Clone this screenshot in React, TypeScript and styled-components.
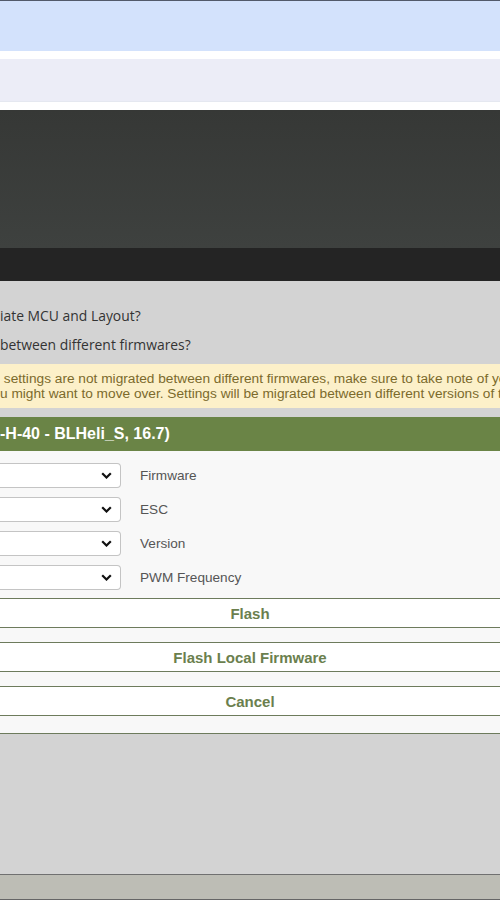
import React from 'react'
import styled, {createGlobalStyle} from 'styled-components'

const GlobalStyle = createGlobalStyle`
  html, body {
    margin: 0;
    padding: 0;
    overflow: hidden;
    font-family: 'Liberation Sans', Arial, sans-serif;
  }
`

const Page = styled.div`
  display: flex;
  flex-direction: column;
  width: 500px;
  height: 900px;
  background: #d3d3d3;
  overflow: hidden;
`

const Band = styled.div<{h: number; bg: string; line?: string}>`
  flex: none;
  height: ${(p) => p.h}px;
  background: ${(p) => p.bg};
  ${(p) => (p.line ? `border-top: 1px solid ${p.line};` : '')}
`

const Gap = styled.div<{h: number}>`
  flex: none;
  height: ${(p) => p.h}px;
  background: #fff;
`

const SubBand = styled.div`
  flex: none;
  height: 42px;
  background: #ecedf7;
  border-bottom: 1px solid #e5e8f0;
`

const Header = styled.div`
  flex: none;
  height: 138px;
  background: linear-gradient(to bottom, #363836, #3e413f);
`

const Toolbar = styled.div`
  flex: none;
  height: 33px;
  background: #242424;
`

const Content = styled.div`
  flex: none;
  padding-top: 25px;
  display: flex;
  flex-direction: column;
`

const Question = styled.p`
  margin: 0 0 9px;
  font-family: 'Open Sans', 'Noto Sans', sans-serif;
  font-size: 13.9px;
  line-height: 20px;
  color: #333;
  white-space: nowrap;
`

const Notice = styled.div`
  background: #fcf0c9;
  color: #7b6a2c;
  font-size: 13.7px;
  line-height: 15px;
  padding: 7px 0;
  white-space: nowrap;
  overflow: hidden;
`

const Panel = styled.div`
  margin-top: 9px;
  background: #f8f8f8;
  border-bottom: 1px solid #6d7b5c;
`

const PanelTitle = styled.div`
  height: 34px;
  display: flex;
  align-items: center;
  background: #6a8446;
  color: #fff;
  font-weight: bold;
  font-size: 16px;
  white-space: nowrap;
`

const PanelBody = styled.div`
  padding: 12px 0 17px;
  display: flex;
  flex-direction: column;
`

const Row = styled.div`
  display: flex;
  align-items: center;
  height: 25px;
  margin-bottom: 9px;
`

const SelectBox = styled.div`
  flex: none;
  box-sizing: border-box;
  width: 121px;
  height: 25px;
  background: #fff;
  border: 1px solid #c4c4c4;
  border-left: none;
  border-radius: 0 4px 4px 0;
  display: flex;
  align-items: center;
  justify-content: flex-end;
  padding-right: 8px;
`

const RowLabel = styled.span`
  margin-left: 19px;
  font-size: 13.6px;
  color: #555;
`

const Buttons = styled.div`
  display: flex;
  flex-direction: column;
  gap: 14px;
  margin-top: -1px;
`

const ActionButton = styled.button`
  display: block;
  width: 100%;
  height: 30px;
  margin: 0;
  padding: 0;
  background: #fff;
  border: none;
  border-top: 1px solid #6d7b5c;
  border-bottom: 1px solid #6d7b5c;
  color: #6b7f4e;
  font-family: 'Liberation Sans', Arial, sans-serif;
  font-weight: bold;
  font-size: 15px;
  cursor: pointer;
`

const Filler = styled.div`
  flex: 1;
`

const StatusBar = styled.div`
  flex: none;
  height: 24px;
  background: #bdbdb5;
  border-top: 1px solid #707070;
  border-bottom: 1px solid #666;
`

const Chevron = () => (
  <svg width="11" height="7" viewBox="0 0 11 7">
    <path
      d="M1.2 1.2 L5.5 5.5 L9.8 1.2"
      fill="none"
      stroke="#111"
      strokeWidth="2.2"
    />
  </svg>
)

const rows = ['Firmware', 'ESC', 'Version', 'PWM Frequency']

export default function App() {
  return (
    <Page>
      <GlobalStyle />
      <Band h={50} bg="#d3e2fc" line="#525a6a" />
      <Gap h={8} />
      <SubBand />
      <Gap h={8} />
      <Header />
      <Toolbar />

      <Content>
        <Question>iate MCU and Layout?</Question>
        <Question>between different firmwares?</Question>
        <Notice>
          &nbsp;settings are not migrated between different firmwares, make
          sure to take note of your
          <br />
          u might want to move over. Settings will be migrated between different
          versions of the same firmware.
        </Notice>

        <Panel>
          <PanelTitle>-H-40 - BLHeli_S, 16.7)</PanelTitle>
          <PanelBody>
            {rows.map((label) => (
              <Row key={label}>
                <SelectBox>
                  <Chevron />
                </SelectBox>
                <RowLabel>{label}</RowLabel>
              </Row>
            ))}
            <Buttons>
              <ActionButton>Flash</ActionButton>
              <ActionButton>Flash Local Firmware</ActionButton>
              <ActionButton>Cancel</ActionButton>
            </Buttons>
          </PanelBody>
        </Panel>
      </Content>

      <Filler />
      <StatusBar />
    </Page>
  )
}
